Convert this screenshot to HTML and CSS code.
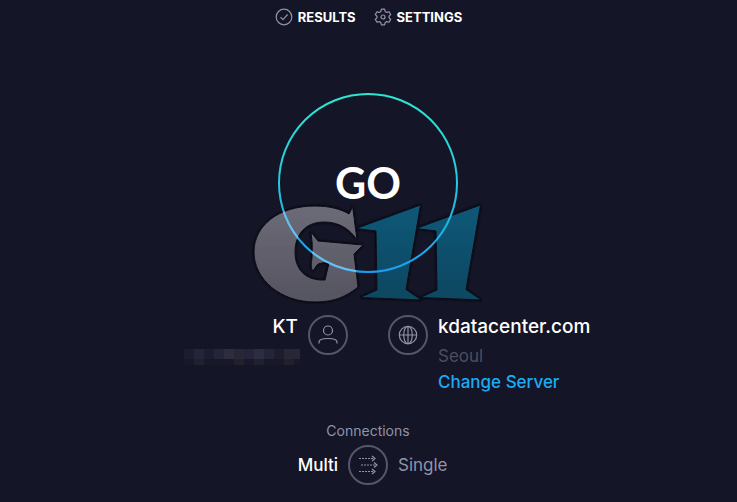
FILE: index.html
```html
<!DOCTYPE html>
<html lang="en">
<head>
<meta charset="utf-8">
<meta name="viewport" content="width=device-width, initial-scale=1">
<title>Speed test</title>
<link rel="stylesheet" href="styles.css">
</head>
<body>
<nav class="nav" aria-label="Main">
  <a class="nav-link" href="#results">
    <svg class="nav-icon" viewBox="0 0 18 18" aria-hidden="true"><circle cx="9" cy="9" r="7.8"/><path d="M5.500 9.200 8 11.600 12.600 6.500"/></svg>
    <span>RESULTS</span>
  </a>
  <a class="nav-link" href="#settings">
    <svg class="nav-icon" viewBox="0 0 18 18" aria-hidden="true"><circle cx="9" cy="9" r="2"/><path d="M7.400 1.200h3.200l.6 2.300 1.500.9 2.300-.7 1.700 2.900-1.700 1.600v1.600l1.700 1.600-1.700 2.900-2.300-.7-1.500.9-.6 2.300H7.400l-.6-2.300-1.500-.9-2.300.7-1.700-2.900L3 9.800V8.200L1.300 6.600 3 3.700l2.300.7 1.500-.9z"/></svg>
    <span>SETTINGS</span>
  </a>
</nav>
<main class="main">
  <button class="go" type="button">
    <svg class="go-art" viewBox="250 90 236 218" aria-hidden="true">
      <defs>
        <linearGradient id="ring" x1="0" y1="0" x2="0" y2="1"><stop offset="0" stop-color="#2ee6cf"/><stop offset=".5" stop-color="#26c8df"/><stop offset="1" stop-color="#1c9ded"/></linearGradient>
        <linearGradient id="gray" x1="0" y1="0" x2="0" y2="1"><stop offset="0" stop-color="#6c6b77"/><stop offset="1" stop-color="#555460"/></linearGradient>
        <linearGradient id="teal" x1="0" y1="0" x2="0" y2="1"><stop offset="0" stop-color="#0e5878"/><stop offset="1" stop-color="#104760"/></linearGradient>
        <path id="letter" d="M352.500 206 357 240C350 229 339 222 324 222 306 222 295 234 295 252 295 269 305 281 325 280L329 263Q320 262 317 265L313 271Q310 268 312 258 313 243 311 232L318 241 363 245 354 254 358 287C347 296 335 302 315 302 280 302 254 279 254 252 254 226 278 206 315 206 329 206 341 209 349 214Q351 211 352.500 206Z"/>
        <clipPath id="letter-clip"><use href="#letter"/></clipPath>
        <filter id="shade" x="-10%" y="-10%" width="120%" height="120%"><feDropShadow dx="0" dy="0" stdDeviation="1.500" flood-color="#06060e" flood-opacity=".9"/></filter>
      </defs>
      <g filter="url(#shade)" stroke="#0e0e1a" stroke-width="1">
        <path fill="url(#teal)" d="M480.500 205 416 228.500 436 231 437 290 420 297.500 481.500 300 466 289.500Z"/>
        <path fill="url(#teal)" d="M420.500 205 356 228.500 376 231 377 290 360 297.500 421.500 300 406 289.500Z"/>
        <use href="#letter" fill="url(#gray)"/>
      </g>
      <circle cx="368" cy="183" r="89" fill="none" stroke="url(#ring)" stroke-width="2"/>
      <circle cx="368" cy="183" r="89" fill="none" stroke="#6cbdec" stroke-width="2" clip-path="url(#letter-clip)"/>
    </svg>
    <span class="go-label">GO</span>
  </button>

  <section class="hosts" aria-label="Connection details">
    <div class="host host-client">
      <div class="host-text">
        <div class="name">KT</div>
        <svg class="masked" viewBox="0 0 116 16" role="img" aria-label="Hidden address" shape-rendering="crispEdges">
          <path fill="#1d1d30" d="M0 0h116v10H0z"/><path fill="#191828" d="M0 10h116v6H0z"/>
          <path fill="#24253a" d="M10 0h10v10H10zM30 0h10v10H30zM60 0h10v10H60zM80 0h10v10H80z"/>
          <path fill="#2c2d41" d="M40 0h10v10H40zM70 0h10v10H70z"/>
          <path fill="#292735" d="M50 0h10v10H50zM100 0h16v10h-16z"/>
          <path fill="#20202f" d="M10 10h10v6H10zM50 10h10v6H50zM70 10h10v6H70zM100 10h10v6h-10z"/>
        </svg>
      </div>
      <svg class="round" viewBox="0 0 40 40" aria-hidden="true"><circle class="rim" cx="20" cy="20" r="19"/><circle cx="20" cy="15.500" r="4.500"/><path d="M11 28.500v-1.500q0-3.500 9-3.500t9 3.500v1.500"/></svg>
    </div>
    <div class="host">
      <svg class="round" viewBox="0 0 40 40" aria-hidden="true"><circle class="rim" cx="20" cy="20" r="19"/><circle cx="20" cy="20" r="8.700"/><ellipse cx="20" cy="20" rx="4.300" ry="8.700"/><path d="M20 11.300v17.400M11.300 20h17.400"/></svg>
      <div class="host-text">
        <div class="name">kdatacenter.com</div>
        <div class="city">Seoul</div>
        <a class="change" href="#servers">Change Server</a>
      </div>
    </div>
  </section>

  <section class="connections" aria-labelledby="connections-title">
    <h2 class="connections-title" id="connections-title">Connections</h2>
    <div class="modes">
      <button class="mode mode-multi active" type="button">Multi</button>
      <button class="toggle" type="button" aria-label="Switch connection mode">
        <svg class="round" viewBox="0 0 40 40" aria-hidden="true"><circle class="rim" cx="20" cy="20" r="19"/><path stroke-dasharray="2 1" d="M11 13.500h15M13 20h15M11 26.500h15"/><path d="M24 11l3 2.500-3 2.500M26 17.500l3 2.500-3 2.500M24 24l3 2.500-3 2.500"/></svg>
      </button>
      <button class="mode" type="button">Single</button>
    </div>
  </section>
</main>
</body>
</html>
```
FILE: styles.css
```css
* {
  box-sizing: border-box;
}

body {
  margin: 0;
  background: #141526;
  color: #fff;
  font-family: Inter, "Open Sans", sans-serif;
}

a {
  text-decoration: none;
}

button {
  padding: 0;
  border: 0;
  background: none;
  color: inherit;
  font: inherit;
  cursor: pointer;
}

svg {
  display: block;
}

.nav {
  display: flex;
  justify-content: center;
  gap: 18px;
  padding-top: 8px;
}

.nav-link {
  display: flex;
  align-items: center;
  gap: 5px;
  color: #fff;
  font-size: 13px;
  line-height: 18px;
  font-weight: 700;
}

.nav-icon {
  width: 18px;
  height: 18px;
  fill: none;
  stroke: #9193a8;
  stroke-width: 1.2;
  stroke-linejoin: round;
}

.main {
  display: flex;
  flex-direction: column;
  align-items: center;
  padding: 67px 1px 0 0;
}

.go {
  position: relative;
  width: 180px;
  height: 180px;
  border-radius: 50%;
}

/* The artwork is wider than the round button it decorates. */
.go-art {
  position: absolute;
  top: -3px;
  left: -28px;
  width: 236px;
  height: 218px;
  pointer-events: none;
}

.go-label {
  position: relative;
  font-family: Lato, Inter, sans-serif;
  font-size: 43px;
  line-height: 48px;
  font-weight: 700;
}

.hosts {
  display: grid;
  grid-template-columns: 1fr 1fr;
  gap: 40px;
  width: 100%;
  margin-top: 42px;
}

.host {
  display: flex;
  align-items: flex-start;
  gap: 10px;
}

.host-client {
  justify-content: flex-end;
  gap: 8px;
}

.host-client .host-text {
  display: flex;
  flex-direction: column;
  align-items: flex-end;
}

.host-client .name {
  padding-right: 2px;
}

.round {
  flex: none;
  width: 40px;
  height: 40px;
  fill: none;
  stroke: #9193a8;
  stroke-width: 1.2;
}

.rim {
  stroke: #55566a;
  stroke-width: 2;
}

.name {
  font-size: 19px;
  line-height: 24px;
  font-weight: 500;
}

.masked {
  width: 116px;
  height: 16px;
  margin-top: 10px;
}

.city,
.change {
  display: block;
  font-size: 17px;
  line-height: 26px;
}

.city {
  margin-top: 4px;
  color: #4c4d60;
}

.change {
  color: #1cabf5;
  font-weight: 500;
}

.connections {
  width: 100%;
  margin-top: 26px;
}

.connections-title {
  margin: 0;
  color: #9193a8;
  font-size: 14px;
  line-height: 20px;
  font-weight: 400;
  text-align: center;
}

.modes {
  display: grid;
  grid-template-columns: 1fr 40px 1fr;
  align-items: center;
  gap: 10px;
  margin-top: 4px;
}

.mode {
  justify-self: start;
  color: #9193a8;
  font-size: 17px;
  line-height: 24px;
}

.mode-multi {
  justify-self: end;
}

.active {
  color: #fff;
  font-weight: 500;
}
```
